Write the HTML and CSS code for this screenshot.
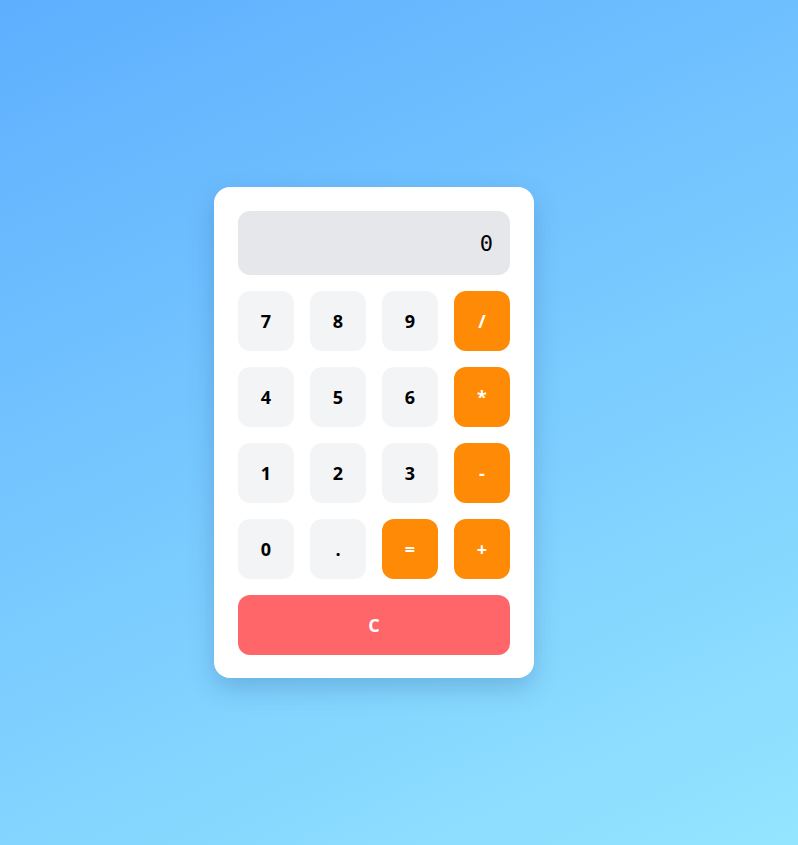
FILE: index.html
```html
<!DOCTYPE html>
<html>
<head>
<meta charset="utf-8">
<link rel="stylesheet" href="styles.css">
</head>
<body>
<main class="page">
  <div class="calc">
    <div class="display">0</div>
    <div class="keys">
      <button class="key">7</button>
      <button class="key">8</button>
      <button class="key">9</button>
      <button class="key op">/</button>
      <button class="key">4</button>
      <button class="key">5</button>
      <button class="key">6</button>
      <button class="key op">*</button>
      <button class="key">1</button>
      <button class="key">2</button>
      <button class="key">3</button>
      <button class="key op">-</button>
      <button class="key">0</button>
      <button class="key">.</button>
      <button class="key op">=</button>
      <button class="key op">+</button>
      <button class="key clear">C</button>
    </div>
  </div>
</main>
</body>
</html>
```
FILE: styles.css
```css
html, body {
  margin: 0;
  padding: 0;
}
body {
  font-family: "Open Sans", "Noto Sans", sans-serif;
  background: linear-gradient(155deg, #5eaffe 0%, #94e5ff 100%);
  min-height: 845px;
}
.page {
  box-sizing: border-box;
  height: 845px;
  display: flex;
  align-items: flex-start;
  justify-content: center;
  padding-top: 187px;
  padding-right: 50px;
}
.calc {
  box-sizing: border-box;
  width: 320px;
  background: #ffffff;
  border-radius: 16px;
  padding: 24px 24px 23px;
  box-shadow: 0 10px 25px rgba(30, 80, 140, 0.25);
}
.display {
  box-sizing: border-box;
  height: 64px;
  background: #e5e7eb;
  border-radius: 12px;
  padding: 0 17px;
  display: flex;
  align-items: center;
  justify-content: flex-end;
  font-family: "DejaVu Sans Mono", monospace;
  font-size: 22px;
  color: #000;
  margin-bottom: 16px;
}
.keys {
  display: grid;
  grid-template-columns: repeat(4, 56px);
  grid-auto-rows: 60px;
  gap: 16px;
}
.key {
  border: none;
  margin: 0;
  padding: 0;
  border-radius: 12px;
  background: #f3f4f6;
  color: #000;
  font-family: "Open Sans", "Noto Sans", sans-serif;
  font-weight: 700;
  font-size: 18px;
}
.key.op {
  background: #ff8a05;
  color: #fff;
}
.key.clear {
  grid-column: 1 / -1;
  background: #ff6669;
  color: #fff;
}
```
